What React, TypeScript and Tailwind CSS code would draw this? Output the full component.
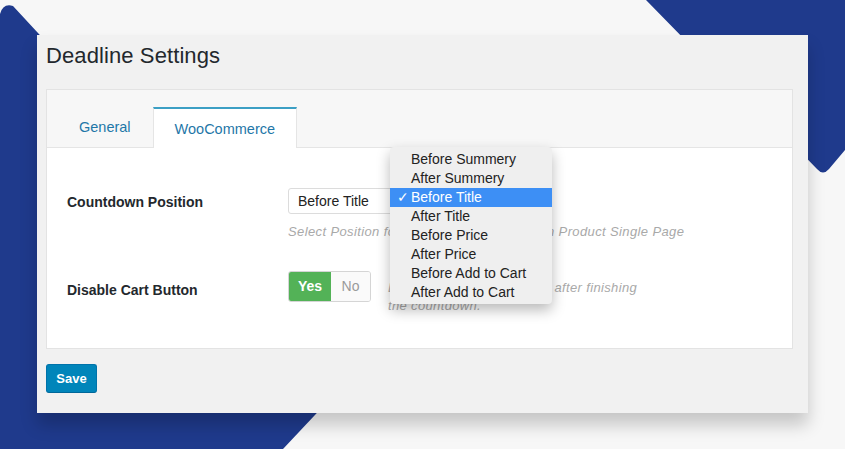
import React from "react";

const items = [
  "Before Summery",
  "After Summery",
  "Before Title",
  "After Title",
  "Before Price",
  "After Price",
  "Before Add to Cart",
  "After Add to Cart",
];

export default function App() {
  return (
    <div
      className="relative w-[845px] h-[449px] overflow-hidden bg-[#f7f7f7]"
      style={{ fontFamily: '"Liberation Sans", Arial, sans-serif' }}
    >
      <svg className="absolute inset-0" width="845" height="449" viewBox="0 0 845 449">
        <path d="M0,14 Q3,3 13,6 L100,100 L611,100 L283,449 L0,449 Z" fill="#1f3a8c" />
        <path d="M646,0 L845,0 L845,150 L829,169 Q823,176 817,169 L750,100 L690,45 Z" fill="#1f3a8c" />
      </svg>

      <div className="relative ml-[37px] mt-[35px] w-[771px] h-[378px] bg-[#f1f1f1] pl-[9px] pr-[15px] shadow-[0_12px_16px_rgba(0,0,0,0.2)]">
        <h1 className="pt-[8px] text-[22px] leading-[26px] text-[#23282d] tracking-[0.1px]">
          Deadline Settings
        </h1>

        <div className="mt-[20px] border border-[#e3e3e3] bg-white">
          <div className="flex items-end h-[58px] pl-[10px] bg-[#f7f7f7] border-b border-[#e5e5e5] text-[14.5px] text-[#1f77a8]">
            <div className="h-[41px] px-[22px] pt-[2px] flex items-center">General</div>
            <div className="h-[41px] px-[21px] pt-[2px] flex items-center bg-white border-t-2 border-t-[#3c9fc4] border-x border-x-[#e5e5e5] -mb-px">
              WooCommerce
            </div>
          </div>

          <div className="h-[200px] pl-[20px] pt-[40px] text-[#23282d]">
            <div className="flex">
              <div className="w-[221px] h-[26px] flex items-center pt-[2px] text-[14px] font-bold">
                Countdown Position
              </div>
              <div className="relative">
                <div className="w-[110px] h-[26px] border border-[#dcdcdc] rounded-[3px] pl-[9px] flex items-center text-[14px] text-[#222]">
                  Before Title
                </div>
                <div className="mt-[10px] text-[13px] leading-[16px] italic tracking-[0.38px] text-[#a9a9a9] whitespace-nowrap">
                  Select Position for the Countdown Timer on Product Single Page
                </div>

                <div className="absolute left-[102px] top-[-41px] w-[162px] h-[157px] bg-[#efefef] shadow-[0_6px_14px_rgba(0,0,0,0.28)] rounded-[4px] pt-[3px] z-20 text-[14px] text-[#222]">
                  {items.map((it) => {
                    const sel = it === "Before Title";
                    return (
                      <div
                        key={it}
                        className={
                          sel
                            ? "relative h-[19px] leading-[19px] pl-[21px] bg-[#3d8ff5] text-white"
                            : "relative h-[19px] leading-[19px] pl-[21px]"
                        }
                      >
                        {sel && <span className="absolute left-[7px] top-0">✓</span>}
                        {it}
                      </div>
                    );
                  })}
                </div>
              </div>
            </div>

            <div className="flex mt-[31px]">
              <div className="w-[221px] h-[33px] flex items-center pt-[5px] text-[14px] font-bold">
                Disable Cart Button
              </div>
              <div className="flex">
                <div className="flex h-[31px] rounded-[3px] overflow-hidden border border-[#d5d5d5] text-[14px]">
                  <div className="w-[42px] bg-[#53b257] text-white font-bold flex items-center justify-center">Yes</div>
                  <div className="w-[39px] bg-[#fafafa] text-[#9a9a9a] flex items-center justify-center">No</div>
                </div>
                <div className="ml-[17px] mt-[8px] text-[13px] leading-[18px] italic tracking-[0.35px] text-[#a9a9a9] whitespace-nowrap">
                  Disable Add to Cart Button after finishing
                  <br />
                  the countdown.
                </div>
              </div>
            </div>
          </div>
        </div>

        <button className="mt-[15px] h-[29px] w-[51px] rounded-[3px] bg-[#0085ba] border border-[#0073aa] border-b-[#006799] text-white text-[13px] font-bold">
          Save
        </button>
      </div>
    </div>
  );
}
